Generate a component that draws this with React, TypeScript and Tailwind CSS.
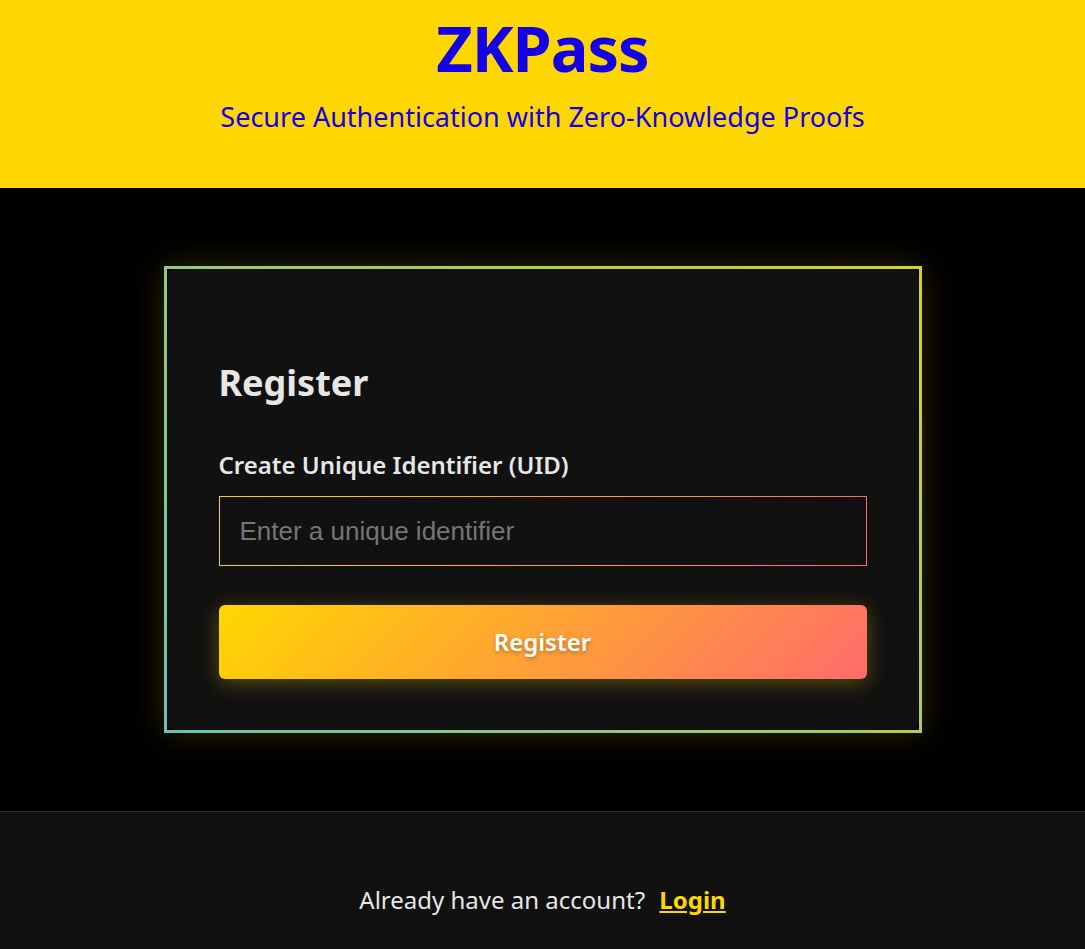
export default function App() {
  return (
    <div className="min-h-screen bg-black font-['Noto_Sans',sans-serif]">
      <header className="flex h-[188px] flex-col items-center bg-[#FFD700] pt-[8px] text-[#1500e6]">
        <h1 className="text-[63px] font-bold leading-[80px] tracking-[-1px]">ZKPass</h1>
        <p className="mt-[10px] text-[27px] leading-[38px]">Secure Authentication with Zero-Knowledge Proofs</p>
      </header>

      <main className="flex justify-center py-[78px]">
        <div className="w-[758px] border-[3px] border-solid [border-image:linear-gradient(45deg,#6fc0b2,#d2d22e)_1] shadow-[0_0_30px_rgba(255,215,0,0.18)]">
          <div className="rounded-lg bg-[#111111] px-[52px] pt-[92px] pb-[51px]">
            <h2 className="text-[36px] font-bold leading-[44px] text-[#e6e6e6]">Register</h2>
            <label className="mt-[45px] block text-[24px] font-semibold leading-[30px] text-[#e6e6e6]">
              Create Unique Identifier (UID)
            </label>
            <input
              type="text"
              placeholder="Enter a unique identifier"
              className="mt-[16px] block h-[70px] w-full border border-solid bg-[#111111] px-[20px] font-['Liberation_Sans',sans-serif] text-[26px] text-[#e6e6e6] outline-none [border-image:linear-gradient(to_right,#FFD700,#FF6B6B)_1] placeholder:text-[#757575]"
            />
            <button className="mt-[39px] block h-[74px] w-full rounded-md bg-[linear-gradient(135deg,#FFD700,#FF6B6B)] text-[24px] font-semibold text-white shadow-[0_4px_20px_rgba(255,215,0,0.3)] [text-shadow:0_2px_4px_rgba(0,0,0,0.3)]">
              Register
            </button>
          </div>
        </div>
      </main>

      <footer className="h-[160px] border-t border-[#333333] bg-[#111111] pt-[70px] text-center text-[24px] leading-[36px] text-[#e6e6e6]">
        Already have an account?{' '}
        <a href="#" className="ml-[8px] font-bold text-[#FFD700] underline underline-offset-2">
          Login
        </a>
      </footer>
    </div>
  )
}
